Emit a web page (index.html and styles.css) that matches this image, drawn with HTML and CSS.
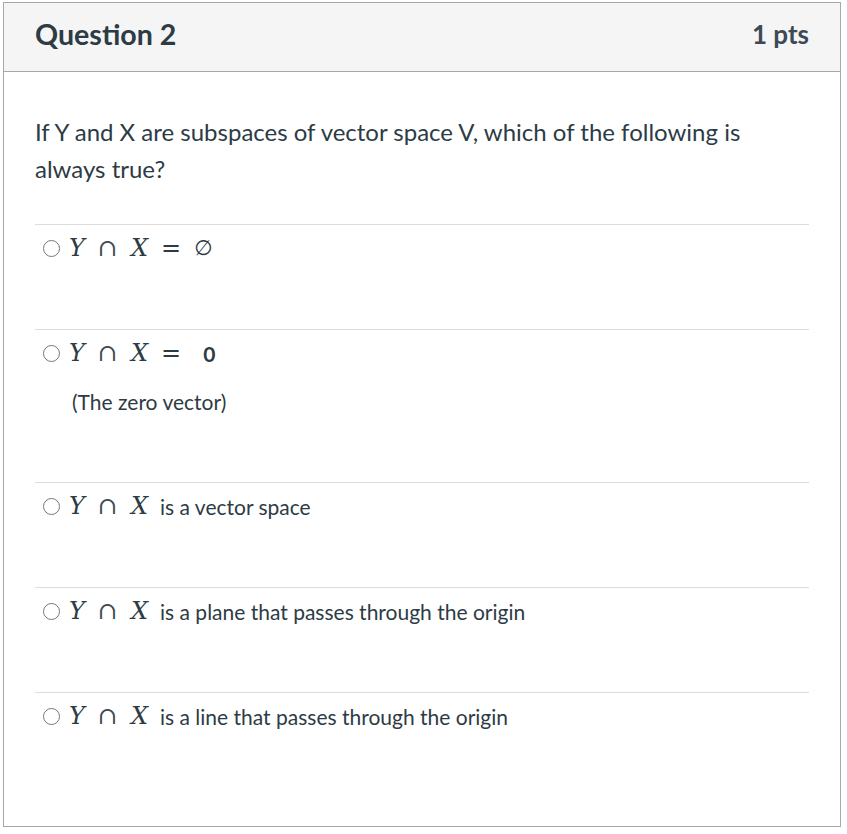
FILE: index.html
```html
<!DOCTYPE html>
<html>
<head>
<meta charset="utf-8">
<link rel="stylesheet" href="styles.css">
</head>
<body>
<div class="card">
  <div class="header">
    <h2 class="title">Question 2</h2>
    <div class="pts">1 pts</div>
  </div>
  <div class="body">
    <p class="question">If Y and X are subspaces of vector space V, which of the following is always true?</p>
    <div class="answer">
      <div class="row"><span class="radio"></span><span class="math"><i>Y</i><span class="op">∩</span><i>X</i><span class="rel">=</span><span class="sym">∅</span></span></div>
    </div>
    <div class="answer tall">
      <div class="row"><span class="radio"></span><span class="math"><i>Y</i><span class="op">∩</span><i>X</i><span class="rel">=</span><b class="zero">0</b></span></div>
      <div class="note">(The zero vector)</div>
    </div>
    <div class="answer">
      <div class="row"><span class="radio"></span><span class="math"><i>Y</i><span class="op">∩</span><i>X</i></span><span class="txt">is a vector space</span></div>
    </div>
    <div class="answer">
      <div class="row"><span class="radio"></span><span class="math"><i>Y</i><span class="op">∩</span><i>X</i></span><span class="txt">is a plane that passes through the origin</span></div>
    </div>
    <div class="answer">
      <div class="row"><span class="radio"></span><span class="math"><i>Y</i><span class="op">∩</span><i>X</i></span><span class="txt">is a line that passes through the origin</span></div>
    </div>
  </div>
</div>
</body>
</html>
```
FILE: styles.css
```css
html, body { margin: 0; padding: 0; background: #fff; }
body { font-family: Lato, "Noto Sans", sans-serif; color: #2d3b45; }
.card {
  margin: 2px 6px 0 3px;
  width: 836px;
  height: 823px;
  border: 1px solid #a8a8a8;
  box-sizing: content-box;
}
.header {
  background: #f5f5f5;
  border-bottom: 1px solid #a8a8a8;
  height: 62px;
  display: flex;
  align-items: center;
  justify-content: space-between;
  padding: 0 31px 6px 31px;
}
.title { margin: 0; font-size: 28.6px; font-weight: 700; }
.pts { font-size: 26px; font-weight: 700; color: #3d4a53; }
.body { padding: 41px 31px 0 31px; }
.question { margin: 0 0 37px 0; font-size: 24px; line-height: 37px; max-width: 740px; }
.answer { border-top: 1px solid #dcdcdc; padding: 5px 0 0 0; height: 99px; }
.answer.tall { height: 147px; }
.row { display: flex; align-items: center; height: 36px; }
.radio {
  width: 15px; height: 15px; border: 1.5px solid #767676; border-radius: 50%;
  margin: 0 9px 0 8px; flex: none;
}
.math { font-family: "DejaVu Serif", "Liberation Serif", serif; font-size: 24px; display: flex; align-items: center; color: #2d3b45; }
.math i { font-style: italic; }
.op { font-family: "DejaVu Serif", serif; font-size: 24px; margin: 0 13px 0 13px; color: #3d4a53; }
.rel { font-family: "DejaVu Sans", sans-serif; font-size: 24px; margin: 0 13px 0 13px; }
.sym { font-family: "DejaVu Sans", sans-serif; font-size: 21px; }
.zero { font-family: Lato, sans-serif; font-weight: 700; font-size: 21px; margin-left: 9px; }
.txt { font-size: 21px; margin-left: 12px; }
.note { font-size: 21px; margin: 19px 0 0 37px; line-height: 24px; }
```
